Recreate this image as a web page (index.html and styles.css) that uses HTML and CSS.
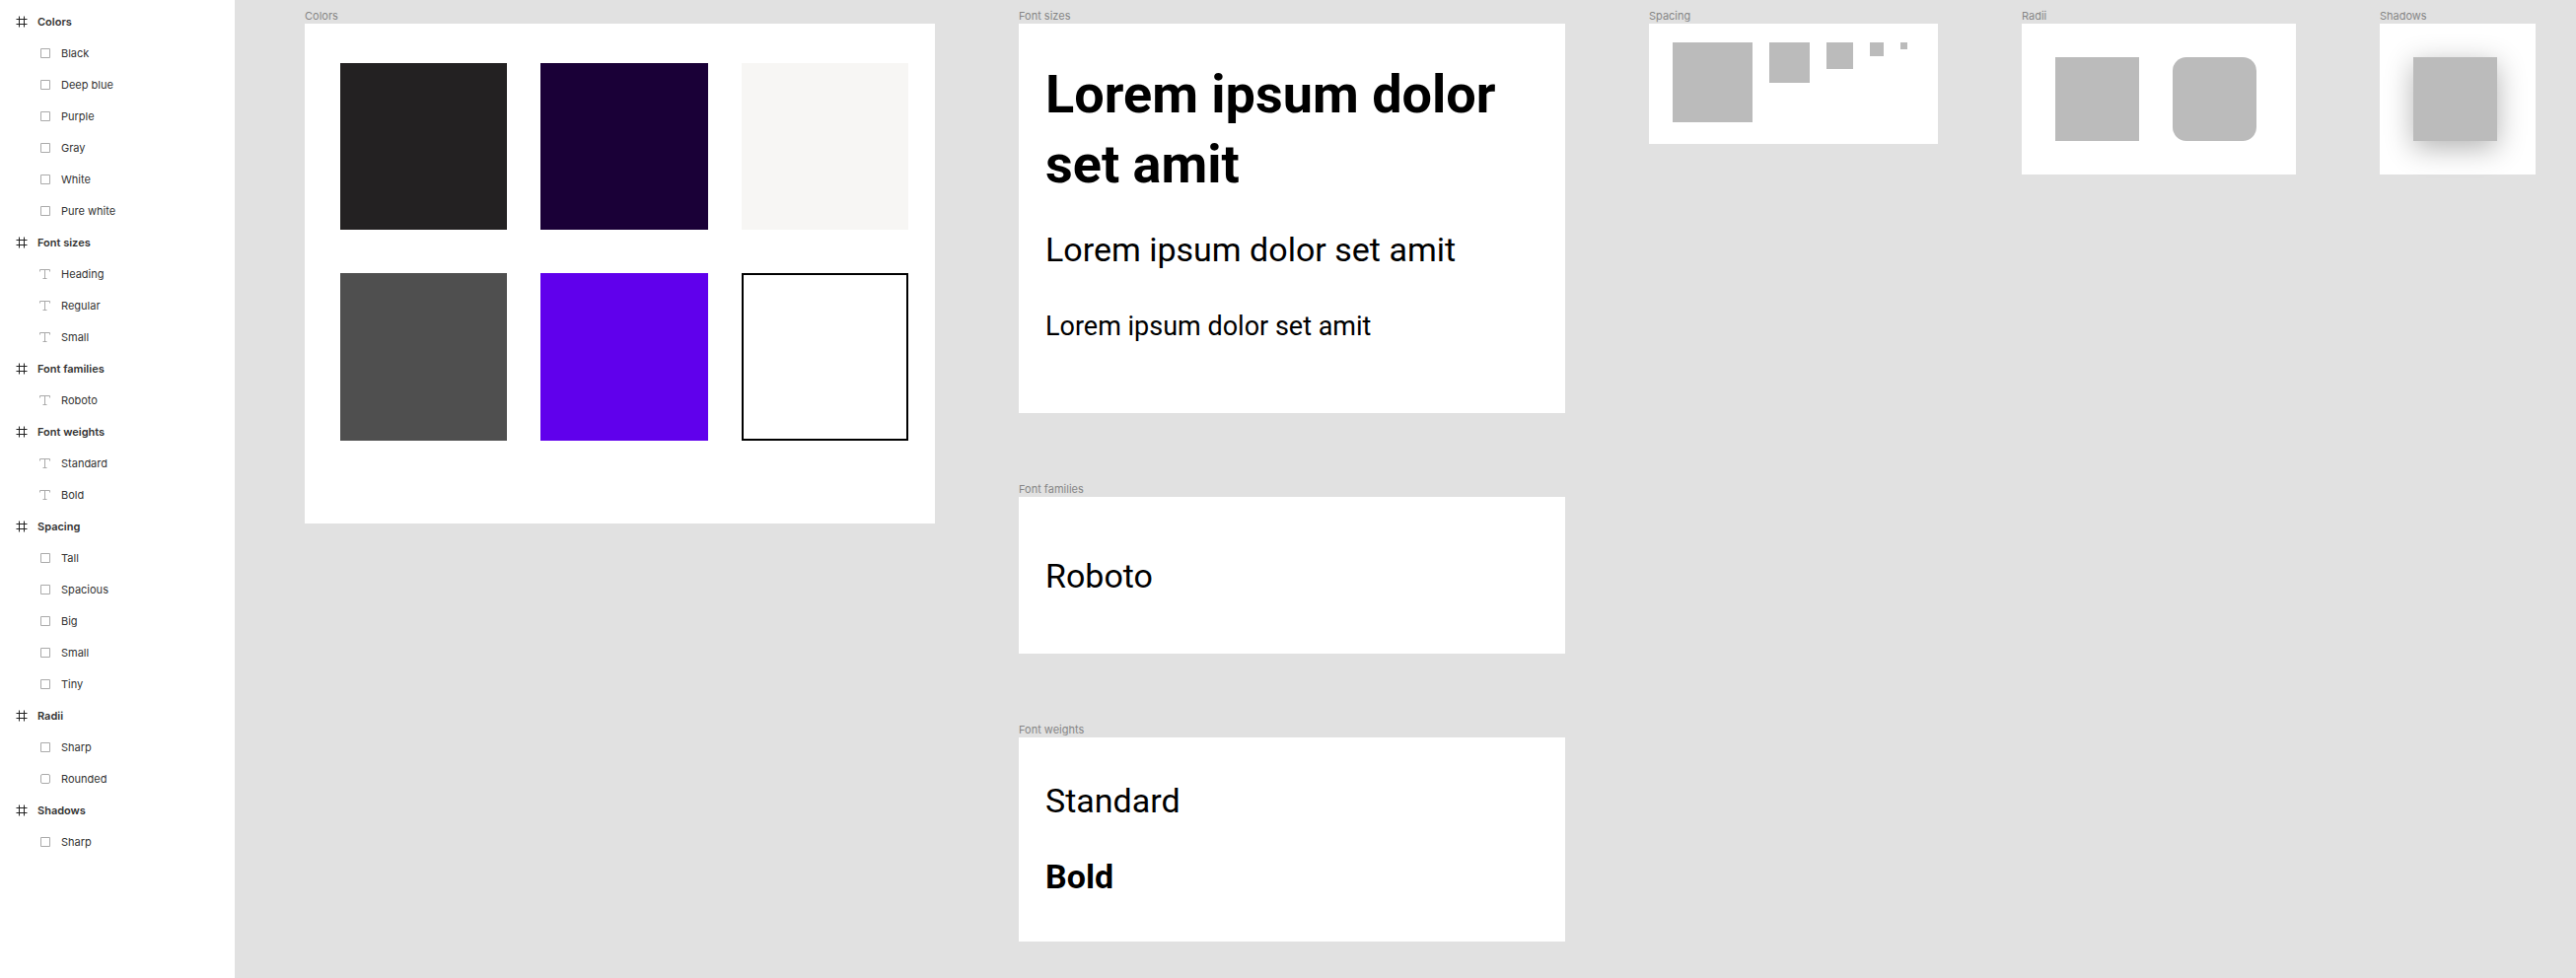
FILE: index.html
```html
<!DOCTYPE html>
<html lang="en">
<head>
<meta charset="utf-8">
<title>Design tokens</title>
<link rel="stylesheet" href="styles.css">
</head>
<body>
<svg class="sprite" aria-hidden="true">
  <symbol id="frame" viewBox="0 0 12 12"><path d="M3.5 .5v11M8.5 .5v11M.5 3.5h11M.5 8.5h11"/></symbol>
  <symbol id="rect" viewBox="0 0 12 12"><path d="M1.5 1.5h9v9h-9z"/></symbol>
  <symbol id="round" viewBox="0 0 12 12"><rect x="1.5" y="1.5" width="9" height="9" rx="1.5"/></symbol>
  <symbol id="text" viewBox="0 0 12 12"><path d="M.5 3.5v-2h10v2M5.5 1.5v9M3.5 10.5h4"/></symbol>
</svg>
<div class="app">
  <aside class="layers">
    <ul class="tree">
      <li><div class="layer group"><svg class="icon"><use href="#frame"/></svg>Colors</div>
        <ul>
          <li class="layer"><svg class="icon"><use href="#rect"/></svg>Black</li>
          <li class="layer"><svg class="icon"><use href="#rect"/></svg>Deep blue</li>
          <li class="layer"><svg class="icon"><use href="#rect"/></svg>Purple</li>
          <li class="layer"><svg class="icon"><use href="#rect"/></svg>Gray</li>
          <li class="layer"><svg class="icon"><use href="#rect"/></svg>White</li>
          <li class="layer"><svg class="icon"><use href="#rect"/></svg>Pure white</li>
        </ul></li>
      <li><div class="layer group"><svg class="icon"><use href="#frame"/></svg>Font sizes</div>
        <ul>
          <li class="layer"><svg class="icon"><use href="#text"/></svg>Heading</li>
          <li class="layer"><svg class="icon"><use href="#text"/></svg>Regular</li>
          <li class="layer"><svg class="icon"><use href="#text"/></svg>Small</li>
        </ul></li>
      <li><div class="layer group"><svg class="icon"><use href="#frame"/></svg>Font families</div>
        <ul>
          <li class="layer"><svg class="icon"><use href="#text"/></svg>Roboto</li>
        </ul></li>
      <li><div class="layer group"><svg class="icon"><use href="#frame"/></svg>Font weights</div>
        <ul>
          <li class="layer"><svg class="icon"><use href="#text"/></svg>Standard</li>
          <li class="layer"><svg class="icon"><use href="#text"/></svg>Bold</li>
        </ul></li>
      <li><div class="layer group"><svg class="icon"><use href="#frame"/></svg>Spacing</div>
        <ul>
          <li class="layer"><svg class="icon"><use href="#rect"/></svg>Tall</li>
          <li class="layer"><svg class="icon"><use href="#rect"/></svg>Spacious</li>
          <li class="layer"><svg class="icon"><use href="#rect"/></svg>Big</li>
          <li class="layer"><svg class="icon"><use href="#rect"/></svg>Small</li>
          <li class="layer"><svg class="icon"><use href="#rect"/></svg>Tiny</li>
        </ul></li>
      <li><div class="layer group"><svg class="icon"><use href="#frame"/></svg>Radii</div>
        <ul>
          <li class="layer"><svg class="icon"><use href="#rect"/></svg>Sharp</li>
          <li class="layer"><svg class="icon"><use href="#round"/></svg>Rounded</li>
        </ul></li>
      <li><div class="layer group"><svg class="icon"><use href="#frame"/></svg>Shadows</div>
        <ul>
          <li class="layer"><svg class="icon"><use href="#rect"/></svg>Sharp</li>
        </ul></li>
    </ul>
  </aside>

  <main class="canvas">
    <section>
      <h2 class="label">Colors</h2>
      <div class="board colors">
        <div class="swatch black"></div>
        <div class="swatch deep-blue"></div>
        <div class="swatch white"></div>
        <div class="swatch gray"></div>
        <div class="swatch purple"></div>
        <div class="swatch pure-white"></div>
      </div>
    </section>

    <div class="type-column">
      <section>
        <h2 class="label">Font sizes</h2>
        <div class="board type sizes">
          <p class="heading">Lorem ipsum dolor set amit</p>
          <p class="regular">Lorem ipsum dolor set amit</p>
          <p class="small">Lorem ipsum dolor set amit</p>
        </div>
      </section>
      <section>
        <h2 class="label">Font families</h2>
        <div class="board type families">
          <p class="regular">Roboto</p>
        </div>
      </section>
      <section>
        <h2 class="label">Font weights</h2>
        <div class="board type weights">
          <p class="regular">Standard</p>
          <p class="regular bold">Bold</p>
        </div>
      </section>
    </div>

    <section>
      <h2 class="label">Spacing</h2>
      <div class="board spacing">
        <div class="box tall"></div>
        <div class="box spacious"></div>
        <div class="box big"></div>
        <div class="box little"></div>
        <div class="box tiny"></div>
      </div>
    </section>

    <section>
      <h2 class="label">Radii</h2>
      <div class="board samples">
        <div class="box"></div>
        <div class="box rounded"></div>
      </div>
    </section>

    <section>
      <h2 class="label">Shadows</h2>
      <div class="board samples">
        <div class="box shadow"></div>
      </div>
    </section>
  </main>
</div>
</body>
</html>
```
FILE: styles.css
```css
* {
  box-sizing: border-box;
}

body,
ul,
h2,
p {
  margin: 0;
  padding: 0;
}

body {
  font-family: Inter, "Liberation Sans", sans-serif;
  font-size: 11px;
}

ul {
  list-style: none;
}

.sprite {
  display: none;
}

.app {
  display: flex;
  min-height: 100vh;
}

/* Layer list */
.layers {
  flex: none;
  width: 238px;
  padding-top: 6px;
  background: #fff;
  color: #333;
}

.layer {
  display: flex;
  align-items: center;
  gap: 10px;
  height: 32px;
  padding-left: 40px;
  line-height: 16px;
}

.group {
  padding-left: 16px;
  font-weight: 600;
}

.icon {
  flex: none;
  width: 12px;
  height: 12px;
  fill: none;
  stroke: #aaa;
}

.group .icon {
  stroke: #222;
}

/* Canvas */
.canvas {
  flex: 1;
  display: grid;
  grid-template-columns: 639fr 554fr 293fr 278fr 158fr;
  align-items: start;
  gap: 85px;
  padding: 0 41px 37px 71px;
  background: #e1e1e1;
}

.label {
  height: 24px;
  padding-top: 8px;
  font-size: 11px;
  font-weight: 400;
  line-height: 16px;
  color: #868686;
}

.board {
  background: #fff;
}

.colors {
  display: grid;
  grid-template-columns: repeat(3, 1fr);
  gap: 44px 34px;
  padding: 40px 27px 84px 36px;
}

.swatch {
  aspect-ratio: 1;
}

.black { background: #232122; }
.deep-blue { background: #1a0037; }
.white { background: #f7f6f4; }
.gray { background: #4f4f4f; }
.purple { background: #6000ec; }
.pure-white { border: 2px solid #000; background: #fff; }

.type-column {
  display: flex;
  flex-direction: column;
  gap: 61px;
}

.type {
  padding: 0 27px;
  font-family: Roboto, sans-serif;
  color: #000;
}

.sizes { padding-top: 36px; padding-bottom: 72px; }
.families { padding-top: 60px; padding-bottom: 59px; }
.weights { padding-top: 44px; padding-bottom: 46px; }

.heading {
  margin-bottom: 31px;
  font-size: 54px;
  font-weight: 700;
  line-height: 71px;
}

.regular {
  font-size: 34px;
  line-height: 40px;
}

.small {
  margin-top: 42px;
  font-size: 27px;
  line-height: 32px;
}

.bold {
  margin-top: 37px;
  font-weight: 700;
}

.box {
  width: 85px;
  aspect-ratio: 1;
  background: #bbb;
}

.spacing {
  display: flex;
  align-items: flex-start;
  gap: 17px;
  padding: 19px 24px 22px;
}

.tall { width: 81px; }
.spacious { width: 41px; }
.big { width: 27px; }
.little { width: 14px; }
.tiny { width: 7px; }

.samples {
  display: flex;
  gap: 34px;
  padding: 34px;
}

.rounded {
  border-radius: 14px;
}

.shadow {
  box-shadow: 0 7px 27px rgba(0, 0, 0, 0.3);
}
```
